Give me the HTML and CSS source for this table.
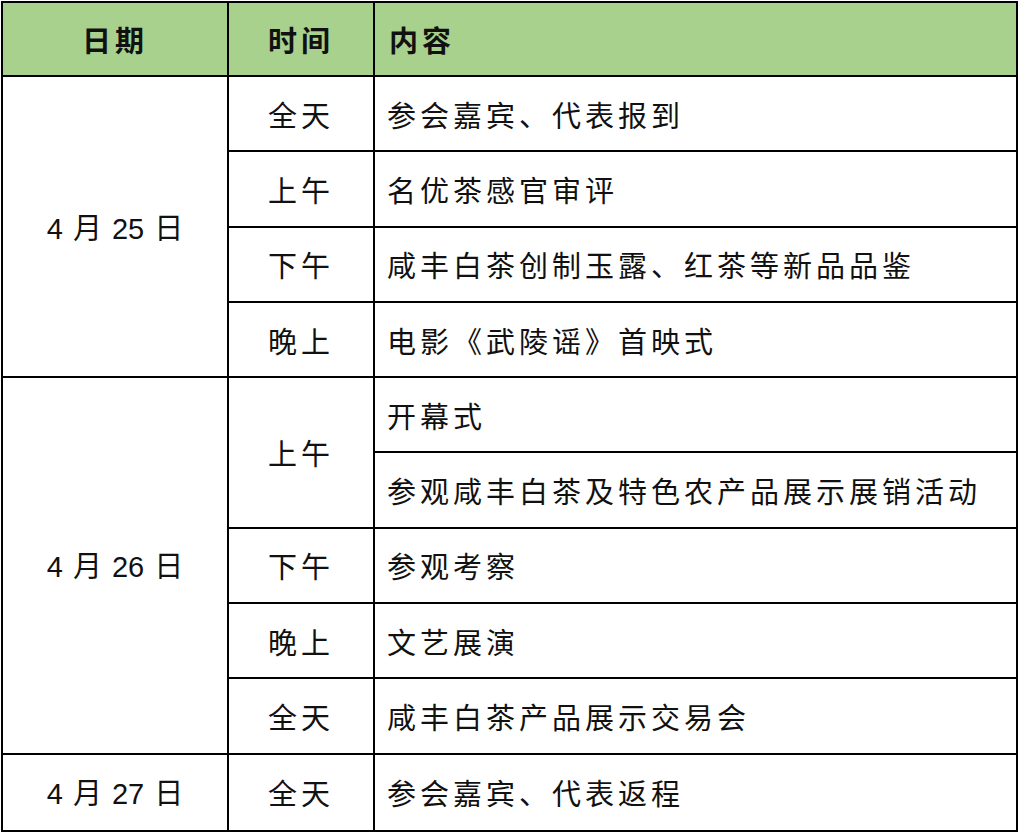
FILE: index.html
```html
<!DOCTYPE html>
<html lang="zh">
<head>
<meta charset="utf-8">
<link rel="stylesheet" href="styles.css">
</head>
<body>
<table class="schedule">
  <colgroup>
    <col class="c-date">
    <col class="c-time">
    <col class="c-content">
  </colgroup>
  <thead>
    <tr>
      <th class="center">日期</th>
      <th class="center">时间</th>
      <th class="left">内容</th>
    </tr>
  </thead>
  <tbody>
    <tr>
      <td class="date" rowspan="4">4 月 25 日</td>
      <td class="time">全天</td>
      <td class="content">参会嘉宾、代表报到</td>
    </tr>
    <tr>
      <td class="time">上午</td>
      <td class="content">名优茶感官审评</td>
    </tr>
    <tr>
      <td class="time">下午</td>
      <td class="content">咸丰白茶创制玉露、红茶等新品品鉴</td>
    </tr>
    <tr>
      <td class="time">晚上</td>
      <td class="content">电影《武陵谣》首映式</td>
    </tr>
    <tr>
      <td class="date" rowspan="5">4 月 26 日</td>
      <td class="time" rowspan="2">上午</td>
      <td class="content">开幕式</td>
    </tr>
    <tr>
      <td class="content">参观咸丰白茶及特色农产品展示展销活动</td>
    </tr>
    <tr>
      <td class="time">下午</td>
      <td class="content">参观考察</td>
    </tr>
    <tr>
      <td class="time">晚上</td>
      <td class="content">文艺展演</td>
    </tr>
    <tr>
      <td class="time">全天</td>
      <td class="content">咸丰白茶产品展示交易会</td>
    </tr>
    <tr>
      <td class="date">4 月 27 日</td>
      <td class="time">全天</td>
      <td class="content">参会嘉宾、代表返程</td>
    </tr>
  </tbody>
</table>
</body>
</html>
```
FILE: styles.css
```css
html, body {
  margin: 0;
  padding: 0;
  background: #ffffff;
}
body {
  padding: 1px 0 0 1px;
  font-family: "Liberation Sans", "Noto Sans CJK SC", sans-serif;
  color: #111;
}
.schedule {
  border-collapse: collapse;
  table-layout: fixed;
  width: 1015px;
}
.c-date { width: 226px; }
.c-time { width: 146px; }
.c-content { width: 643px; }
.schedule th,
.schedule td {
  border: 2px solid #000;
  height: 73.3px;
  padding: 0;
  font-size: 29px;
  font-weight: 400;
  letter-spacing: 4px;
  vertical-align: middle;
}
.schedule th {
  background: #a9d18e;
  font-weight: 700;
  height: 72px;
}
.schedule .center { text-align: center; }
.schedule .left { text-align: left; padding-left: 14px; }
.schedule .date {
  text-align: center;
  letter-spacing: 0;
  word-spacing: 2px;
  padding-bottom: 2px;
}
.schedule .time { text-align: center; }
.schedule .content {
  text-align: left;
  padding-left: 12px;
}
```
